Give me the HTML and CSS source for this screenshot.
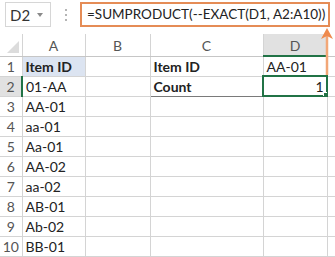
FILE: index.html
```html
<!DOCTYPE html>
<html lang="en">

<head>
  <meta charset="UTF-8">
  <title>EXACT formula</title>
  <link rel="stylesheet" href="styles.css">
</head>

<body>
  <!-- formula bar -->
  <div class="formula-bar">
    <div class="name-box">
      <span>D2</span>
      <span class="drop"></span>
    </div>
    <div class="dots"><i></i><i></i><i></i></div>
    <div class="formula">=SUMPRODUCT(--EXACT(D1, A2:A10))</div>
  </div>

  <!-- sheet -->
  <table class="sheet">
    <colgroup>
      <col class="c-head">
      <col class="c-a">
      <col class="c-b">
      <col class="c-c">
      <col class="c-d">
      <col>
    </colgroup>
    <tr class="col-heads">
      <th class="corner"><span class="tri"></span></th>
      <th>A</th>
      <th>B</th>
      <th>C</th>
      <th class="active-col">D</th>
      <th></th>
    </tr>
    <tr>
      <th>1</th>
      <td class="blue bold">Item ID</td>
      <td></td>
      <td class="bold box-l">Item ID</td>
      <td>AA-01</td>
      <td></td>
    </tr>
    <tr>
      <th class="active-row">2</th>
      <td>01-AA</td>
      <td></td>
      <td class="bold box-l box-b">Count</td>
      <td class="num box-b selected">1<span class="handle"></span></td>
      <td></td>
    </tr>
    <tr><th>3</th><td>AA-01</td><td></td><td></td><td></td><td></td></tr>
    <tr><th>4</th><td>aa-01</td><td></td><td></td><td></td><td></td></tr>
    <tr><th>5</th><td>Aa-01</td><td></td><td></td><td></td><td></td></tr>
    <tr><th>6</th><td>AA-02</td><td></td><td></td><td></td><td></td></tr>
    <tr><th>7</th><td>aa-02</td><td></td><td></td><td></td><td></td></tr>
    <tr><th>8</th><td>AB-01</td><td></td><td></td><td></td><td></td></tr>
    <tr><th>9</th><td>Ab-02</td><td></td><td></td><td></td><td></td></tr>
    <tr><th>10</th><td>BB-01</td><td></td><td></td><td></td><td></td></tr>
  </table>

  <!-- arrow pointing to the formula -->
  <svg class="arrow" width="14" height="50" viewBox="0 0 14 50">
    <line x1="7" y1="6" x2="7" y2="48" stroke="#f2a777" stroke-width="2.5" />
    <path d="M1 12 L7 1 L13 12 L7 9 Z" fill="#ee8a4e" />
  </svg>
</body>

</html>
```

FILE: styles.css
```css
body {
  margin: 0;
  width: 335px;
  height: 257px;
  overflow: hidden;
  background: #fff;
  font-family: Lato, 'Open Sans', sans-serif;
  color: #222;
  position: relative;
}

/* formula bar */
.formula-bar {
  display: flex;
  align-items: center;
  height: 25px;
  padding: 2px 5px 0 5px;
}

.name-box {
  flex-shrink: 0;
  display: flex;
  align-items: center;
  justify-content: space-between;
  padding: 0 7px 0 4px;
  box-sizing: border-box;
  width: 46px;
  height: 25px;
  border: 1px solid #d6d6d6;
  font-size: 15px;
  color: #333;
}

.drop {
  width: 0;
  height: 0;
  border-left: 3px solid transparent;
  border-right: 3px solid transparent;
  border-top: 4px solid #8a8a8a;
}

.dots {
  flex-shrink: 0;
  width: 29px;
  display: flex;
  flex-direction: column;
  align-items: center;
  gap: 3px;
}

.dots i {
  width: 2px;
  height: 2px;
  background: #b5b5b5;
}

.formula {
  flex: 1;
  min-width: 0;
  height: 25px;
  border: 2px solid #e58c56;
  box-sizing: border-box;
  padding-left: 5px;
  font-size: 13.5px;
  line-height: 21px;
  color: #222;
  white-space: nowrap;
}

/* sheet */
.sheet {
  margin-top: 7px;
  border-collapse: collapse;
  table-layout: fixed;
  width: 340px;
  font-size: 14px;
}

.c-head { width: 22px; }
.c-a { width: 63px; }
.c-b { width: 65px; }
.c-c { width: 113px; }
.c-d { width: 64px; }

.sheet th,
.sheet td {
  border-right: 1px solid #d4d4d4;
  border-bottom: 1px solid #d4d4d4;
  height: 20px;
  padding: 1px 3px 0;
  white-space: nowrap;
  overflow: hidden;
  box-sizing: border-box;
}

.sheet th {
  font-weight: normal;
  color: #555;
  text-align: center;
  padding: 1px 0 0;
}

.col-heads th {
  height: 22px;
  border-bottom-color: #c6c6c6;
}

.corner {
  position: relative;
}

.tri {
  position: absolute;
  right: 3px;
  bottom: 3px;
  width: 0;
  height: 0;
  border-left: 12px solid transparent;
  border-bottom: 12px solid #dcdcdc;
}

.active-col {
  background: #e1e1e1;
  border-bottom: 2px solid #217346 !important;
}

.active-row {
  background: #e1e1e1;
  border-right: 2px solid #217346 !important;
}

.blue {
  background: #dce4f1;
}

.bold {
  font-weight: bold;
}

.num {
  text-align: right;
}

.box-l {
  border-left: 1px solid #7a7a7a;
}

.box-b {
  border-bottom: 1px solid #7a7a7a !important;
}

/* active cell */
.selected {
  position: relative;
  outline: 2px solid #217346;
  outline-offset: -1px;
}

.handle {
  position: absolute;
  right: -3px;
  bottom: -3px;
  width: 5px;
  height: 5px;
  background: #217346;
  border: 1px solid #fff;
}

.arrow {
  position: absolute;
  left: 320px;
  top: 27px;
}
```
